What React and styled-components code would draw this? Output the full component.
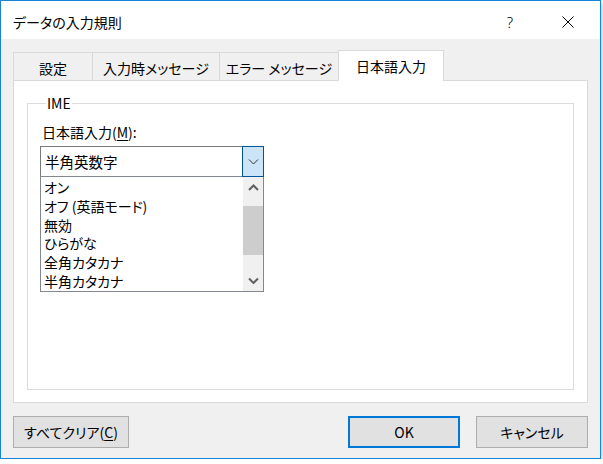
import React from 'react';
import styled, { createGlobalStyle } from 'styled-components';

const GlobalStyle = createGlobalStyle`
  body {
    margin: 0;
    background: #ffffff;
    font-family: "Noto Sans CJK JP", "Noto Sans", sans-serif;
    font-size: 14px;
    color: #000;
    font-feature-settings: "palt";
  }
`;

const Window = styled.div`
  box-sizing: border-box;
  width: 601px;
  height: 459px;
  border: 1px solid #1883d7;
  background: #f0f0f0;
  display: flex;
  flex-direction: column;
  box-shadow: 1px 2px 5px rgba(0, 0, 0, 0.25);
`;

const TitleBar = styled.div`
  height: 38px;
  background: #fff;
  display: flex;
  align-items: center;
  padding-left: 12px;
  padding-right: 3px;
`;

const Title = styled.div`
  flex: 1;
  font-size: 14px;
  padding-top: 3px;
`;

const TitleButton = styled.div`
  width: 58px;
  height: 100%;
  display: flex;
  align-items: center;
  justify-content: center;
  font-family: "Noto Sans", sans-serif;
  font-size: 15px;
  font-weight: 300;
  padding-top: 3px;
  box-sizing: border-box;
`;

const Body = styled.div`
  flex: 1;
  padding: 11px 12px 0 12px;
  display: flex;
  flex-direction: column;
`;

const TabStrip = styled.div`
  display: flex;
  align-items: flex-end;
  height: 30px;
`;

const Tab = styled.div`
  box-sizing: border-box;
  width: ${p => p.$w}px;
  height: ${p => (p.$active ? 31 : 28)}px;
  margin-left: ${p => (p.$first ? 0 : -1)}px;
  margin-bottom: ${p => (p.$active ? -1 : 0)}px;
  border: 1px solid #d9d9d9;
  border-bottom: none;
  background: ${p => (p.$active ? '#fff' : '#f0f0f0')};
  position: relative;
  z-index: ${p => (p.$active ? 1 : 0)};
  display: flex;
  align-items: center;
  justify-content: center;
  font-size: 14px;
  padding-top: ${p => (p.$active ? 0 : 2)}px;
`;

const Panel = styled.div`
  box-sizing: border-box;
  height: 323px;
  background: #fff;
  border: 1px solid #d9d9d9;
  padding: 14px 13px 0 13px;
`;

const GroupBox = styled.fieldset`
  box-sizing: border-box;
  margin: 0;
  height: 295px;
  border: 1px solid #dcdcdc;
  padding: 10px 12px 0 12px;
  min-width: 0;
`;

const Legend = styled.legend`
  padding: 0 1px;
  margin-left: 6px;
  font-size: 14px;
  line-height: 16px;
`;

const FieldLabel = styled.div`
  padding-left: 2px;
  height: 22px;
  line-height: 22px;
  margin-bottom: 3px;
`;

const Underline = styled.span`
  text-decoration: underline;
  text-underline-offset: 2px;
`;

const Combo = styled.div`
  box-sizing: border-box;
  width: 224px;
  height: 31px;
  border: 1px solid #7a7a7a;
  display: flex;
  align-items: stretch;
`;

const ComboText = styled.div`
  flex: 1;
  display: flex;
  align-items: center;
  padding-left: 4px;
  font-size: 14.5px;
`;

const ComboButton = styled.div`
  box-sizing: border-box;
  width: 22px;
  margin: -1px -1px -1px 0;
  border: 1px solid #005499;
  background: #cce4f7;
  display: flex;
  align-items: center;
  justify-content: center;
`;

const ListBox = styled.div`
  box-sizing: border-box;
  width: 224px;
  height: 116px;
  margin-top: -1px;
  border: 1px solid #828790;
  background: #fff;
  display: flex;
  overflow: hidden;
`;

const Items = styled.div`
  flex: 1;
  padding: 1px 0 0 3px;
  overflow: hidden;
`;

const Item = styled.div`
  height: 18.8px;
  line-height: 19px;
  white-space: nowrap;
`;

const ScrollBar = styled.div`
  width: 20px;
  background: #f0f0f0;
  display: flex;
  flex-direction: column;
`;

const ScrollArrow = styled.div`
  height: 21px;
  display: flex;
  align-items: center;
  justify-content: center;
`;

const Track = styled.div`
  flex: 1;
  padding-top: 8px;
`;

const Thumb = styled.div`
  height: 49px;
  background: #cdcdcd;
`;

const ButtonRow = styled.div`
  display: flex;
  margin-top: 13px;
`;

const Button = styled.div`
  box-sizing: border-box;
  width: ${p => p.$w}px;
  height: 32px;
  margin-left: ${p => p.$ml || '0'};
  background: #e1e1e1;
  border: ${p => (p.$default ? '2px solid #0078d7' : '1px solid #adadad')};
  display: flex;
  align-items: center;
  justify-content: center;
  font-size: 14px;
`;

const Chevron = ({ dir = 'down', color = '#333', w = 9, sw = 1 }) => (
  <svg width={w + 2} height={w / 2 + 3} viewBox={`0 0 ${w + 2} ${w / 2 + 3}`}>
    <polyline
      points={
        dir === 'down'
          ? `1,1.5 ${w / 2 + 1},${w / 2 + 1.5} ${w + 1},1.5`
          : `1,${w / 2 + 1.5} ${w / 2 + 1},1.5 ${w + 1},${w / 2 + 1.5}`
      }
      fill="none"
      stroke={color}
      strokeWidth={sw}
    />
  </svg>
);

const items = ['オン', 'オフ (英語モード)', '無効', 'ひらがな', '全角カタカナ', '半角カタカナ'];

export default function App() {
  return (
    <>
      <GlobalStyle />
      <Window>
        <TitleBar>
          <Title>データの入力規則</Title>
          <TitleButton>?</TitleButton>
          <TitleButton>
            <svg width="12" height="12" viewBox="0 0 12 12">
              <path d="M0.5 0.5 L11.5 11.5 M11.5 0.5 L0.5 11.5" stroke="#000" strokeWidth="1" />
            </svg>
          </TitleButton>
        </TitleBar>
        <Body>
          <TabStrip>
            <Tab $first $w={80}>設定</Tab>
            <Tab $w={128}>入力時メッセージ</Tab>
            <Tab $w={120}>エラー メッセージ</Tab>
            <Tab $active $w={106}>日本語入力</Tab>
          </TabStrip>
          <Panel>
            <GroupBox>
              <Legend>IME</Legend>
              <FieldLabel>
                日本語入力(<Underline>M</Underline>):
              </FieldLabel>
              <Combo>
                <ComboText>半角英数字</ComboText>
                <ComboButton>
                  <Chevron dir="down" color="#333" w={9} sw={1} />
                </ComboButton>
              </Combo>
              <ListBox>
                <Items>
                  {items.map(t => (
                    <Item key={t}>{t}</Item>
                  ))}
                </Items>
                <ScrollBar>
                  <ScrollArrow>
                    <Chevron dir="up" color="#606060" w={9} sw={2} />
                  </ScrollArrow>
                  <Track>
                    <Thumb />
                  </Track>
                  <ScrollArrow>
                    <Chevron dir="down" color="#606060" w={9} sw={2} />
                  </ScrollArrow>
                </ScrollBar>
              </ListBox>
            </GroupBox>
          </Panel>
          <ButtonRow>
            <Button $w={116}>
              すべてクリア(<Underline>C</Underline>)
            </Button>
            <Button $w={112} $default $ml="auto">OK</Button>
            <Button $w={112} $ml="16px">キャンセル</Button>
          </ButtonRow>
        </Body>
      </Window>
    </>
  );
}
